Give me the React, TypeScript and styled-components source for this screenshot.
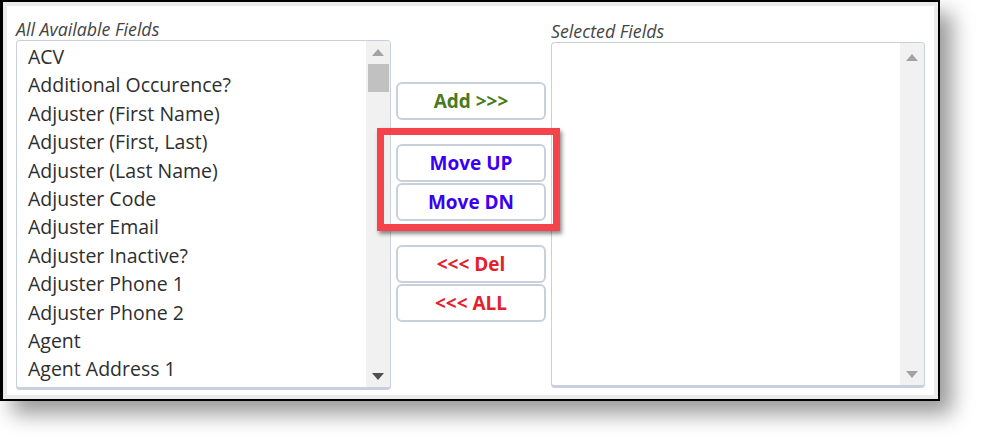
import React from "react";
import styled, { createGlobalStyle } from "styled-components";

const Global = createGlobalStyle`
  html, body { margin: 0; padding: 0; background: #ffffff; }
  body { font-family: "Open Sans", "Liberation Sans", sans-serif; }
  * { box-sizing: border-box; }
`;

const Page = styled.div`
  width: 983px;
  height: 444px;
  background: #fff;
  overflow: hidden;
`;

const Frame = styled.div`
  width: 940px;
  height: 401px;
  border: 2px solid #000;
  border-left-width: 3px;
  background: #ebebeb;
  padding: 4px;
  box-shadow: 12px 13px 20px rgba(0, 0, 0, 0.4);
`;

const Content = styled.div`
  height: 100%;
  background: #fff;
  display: flex;
  align-items: flex-start;
  padding: 12px 9px 0 9px;
  gap: 5px;
`;

const Column = styled.div<{ $w: number; $offset?: number }>`
  width: ${(p) => p.$w}px;
  display: flex;
  flex-direction: column;
  margin-top: ${(p) => p.$offset ?? 0}px;
`;

const Label = styled.div`
  font-family: "Open Sans", sans-serif;
  font-style: italic;
  font-size: 17.8px;
  line-height: 22px;
  color: #444;
`;

const ListBox = styled.div<{ $h: number }>`
  height: ${(p) => p.$h}px;
  border: 1px solid #c8d0dc;
  border-bottom: 3px solid #c8d0dc;
  border-radius: 4px;
  display: flex;
  overflow: hidden;
  background: #fff;
`;

const Items = styled.div`
  flex: 1;
  padding: 2px 0 0 11px;
  overflow: hidden;
`;

const Item = styled.div`
  font-family: "Open Sans", sans-serif;
  font-size: 19.5px;
  height: 28.4px;
  line-height: 28.4px;
  color: #2e2e2e;
  white-space: nowrap;
`;

const Track = styled.div`
  width: 24px;
  background: #f1f1f1;
  display: flex;
  flex-direction: column;
`;

const ArrowBox = styled.div<{ $h: number }>`
  height: ${(p) => p.$h}px;
  display: flex;
  align-items: center;
  justify-content: center;
  flex: none;
`;

const Thumb = styled.div`
  height: 28px;
  margin: 0 1px 0 2px;
  background: #c1c1c1;
  flex: none;
`;

const Spacer = styled.div`
  flex: 1;
`;

const Middle = styled.div`
  width: 150px;
  display: flex;
  flex-direction: column;
  padding-top: 64px;
`;

const Button = styled.div<{ $color: string }>`
  height: 38px;
  border: 2px solid #c8d0dc;
  border-radius: 6px;
  background: #fff;
  display: flex;
  align-items: center;
  justify-content: center;
  font-family: "Open Sans", sans-serif;
  font-weight: 700;
  font-size: 19px;
  color: ${(p) => p.$color};
  white-space: nowrap;
`;

const Group = styled.div<{ $gapTop: number }>`
  position: relative;
  display: flex;
  flex-direction: column;
  gap: 1px;
  margin-top: ${(p) => p.$gapTop}px;
`;

const Highlight = styled.div`
  position: absolute;
  top: -16px;
  left: -19px;
  right: -14px;
  bottom: -10px;
  border: 7px solid #f4434a;
  box-shadow: 2px 3px 4px rgba(0, 0, 0, 0.45);
  pointer-events: none;
`;

const Up = ({ color }: { color: string }) => (
  <svg width="12" height="7" viewBox="0 0 12 7">
    <polygon points="0,7 12,7 6,0" fill={color} />
  </svg>
);
const Down = ({ color }: { color: string }) => (
  <svg width="12" height="7" viewBox="0 0 12 7">
    <polygon points="0,0 12,0 6,7" fill={color} />
  </svg>
);

const fields = [
  "ACV",
  "Additional Occurence?",
  "Adjuster (First Name)",
  "Adjuster (First, Last)",
  "Adjuster (Last Name)",
  "Adjuster Code",
  "Adjuster Email",
  "Adjuster Inactive?",
  "Adjuster Phone 1",
  "Adjuster Phone 2",
  "Agent",
  "Agent Address 1",
];

export default function App() {
  return (
    <Page>
      <Global />
      <Frame>
        <Content>
          <Column $w={375}>
            <Label>All Available Fields</Label>
            <ListBox $h={350}>
              <Items>
                {fields.map((f) => (
                  <Item key={f}>{f}</Item>
                ))}
              </Items>
              <Track>
                <ArrowBox $h={23}>
                  <Up color="#a3a3a3" />
                </ArrowBox>
                <Thumb />
                <Spacer />
                <ArrowBox $h={22}>
                  <Down color="#505050" />
                </ArrowBox>
              </Track>
            </ListBox>
          </Column>
          <Middle>
            <Button $color="#497a1c">Add &gt;&gt;&gt;</Button>
            <Group $gapTop={24}>
              <Button $color="#3a00f2">Move UP</Button>
              <Button $color="#3a00f2">Move DN</Button>
              <Highlight />
            </Group>
            <Group $gapTop={24}>
              <Button $color="#e3212b">&lt;&lt;&lt; Del</Button>
              <Button $color="#e3212b">&lt;&lt;&lt; ALL</Button>
            </Group>
          </Middle>
          <Column $w={374} $offset={2}>
            <Label>Selected Fields</Label>
            <ListBox $h={346}>
              <Items />
              <Track>
                <ArrowBox $h={28}>
                  <Up color="#a3a3a3" />
                </ArrowBox>
                <Spacer />
                <ArrowBox $h={22}>
                  <Down color="#a3a3a3" />
                </ArrowBox>
              </Track>
            </ListBox>
          </Column>
        </Content>
      </Frame>
    </Page>
  );
}
